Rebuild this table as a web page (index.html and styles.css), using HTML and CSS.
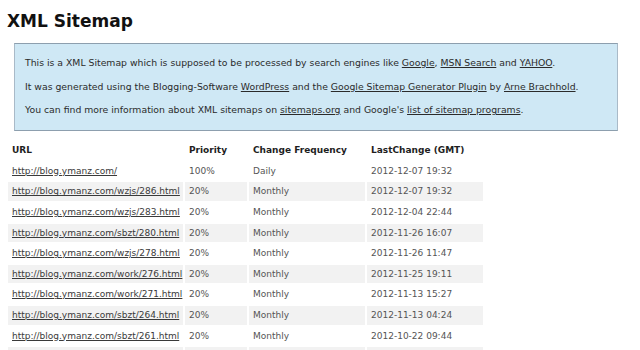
FILE: index.html
```html
<!DOCTYPE html>
<html>
<head>
<meta charset="utf-8">
<title>XML Sitemap</title>
<link rel="stylesheet" href="styles.css">
</head>
<body>
<h1 class="title">XML Sitemap</h1>
<div class="intro">
<p>This is a XML Sitemap which is supposed to be processed by search engines like <a href="#">Google</a>, <a href="#">MSN Search</a> and <a href="#">YAHOO</a>.</p>
<p>It was generated using the Blogging-Software <a href="#">WordPress</a> and the <a href="#">Google Sitemap Generator Plugin</a> by <a href="#">Arne Brachhold</a>.</p>
<p>You can find more information about XML sitemaps on <a href="#">sitemaps.org</a> and Google's <a href="#">list of sitemap programs</a>.</p>
</div>
<table class="urls">
<colgroup><col class="c-url"><col class="c-pri"><col class="c-freq"><col class="c-date"></colgroup>
<thead>
<tr><th>URL</th><th>Priority</th><th>Change Frequency</th><th>LastChange (GMT)</th></tr>
</thead>
<tbody>
<tr><td><a href="#">http://blog.ymanz.com/</a></td><td>100%</td><td>Daily</td><td>2012-12-07 19:32</td></tr>
<tr class="odd"><td><a href="#">http://blog.ymanz.com/wzjs/286.html</a></td><td>20%</td><td>Monthly</td><td>2012-12-07 19:32</td></tr>
<tr><td><a href="#">http://blog.ymanz.com/wzjs/283.html</a></td><td>20%</td><td>Monthly</td><td>2012-12-04 22:44</td></tr>
<tr class="odd"><td><a href="#">http://blog.ymanz.com/sbzt/280.html</a></td><td>20%</td><td>Monthly</td><td>2012-11-26 16:07</td></tr>
<tr><td><a href="#">http://blog.ymanz.com/wzjs/278.html</a></td><td>20%</td><td>Monthly</td><td>2012-11-26 11:47</td></tr>
<tr class="odd"><td><a href="#">http://blog.ymanz.com/work/276.html</a></td><td>20%</td><td>Monthly</td><td>2012-11-25 19:11</td></tr>
<tr><td><a href="#">http://blog.ymanz.com/work/271.html</a></td><td>20%</td><td>Monthly</td><td>2012-11-13 15:27</td></tr>
<tr class="odd"><td><a href="#">http://blog.ymanz.com/sbzt/264.html</a></td><td>20%</td><td>Monthly</td><td>2012-11-13 04:24</td></tr>
<tr><td><a href="#">http://blog.ymanz.com/sbzt/261.html</a></td><td>20%</td><td>Monthly</td><td>2012-10-22 09:44</td></tr>
<tr class="odd"><td>&nbsp;</td><td>&nbsp;</td><td>&nbsp;</td><td>&nbsp;</td></tr>
</tbody>
</table>
</body>
</html>
```
FILE: styles.css
```css
html, body {
  margin: 0;
  padding: 0;
  background: #fff;
}
body {
  font-family: "DejaVu Sans", "Liberation Sans", sans-serif;
  font-size: 9px;
  color: #2a2a2a;
}
.title {
  font-size: 17px;
  font-weight: bold;
  line-height: 20px;
  margin: 11px 0 0 7px;
  color: #111;
}
.intro {
  margin: 12px 0 0 14px;
  width: 582px;
  padding: 7px 10px 8px;
  background: #cfe8f5;
  border: 1px solid #a9bac8;
  border-top-color: #8d9fae;
  border-bottom-color: #8d9fae;
}
.intro p {
  margin: 0;
  font-size: 9.3px;
  line-height: 23.5px;
  color: #2b2b2b;
}
.intro a {
  color: #2b2b2b;
  text-decoration: underline;
}
.urls {
  margin: 8.7px 0 0 6px;
  width: 479px;
  border-collapse: separate;
  border-spacing: 2px;
  table-layout: fixed;
}
.c-url { width: 175px; }
.c-pri { width: 62px; }
.c-freq { width: 116px; }
.c-date { width: 116px; }
.urls th, .urls td {
  text-align: left;
  padding: 2px 4px;
  line-height: 14.6px;
  white-space: nowrap;
  overflow: hidden;
}
.urls th {
  font-weight: bold;
  color: #1e1e1e;
}
.urls td {
  color: #555;
}
.urls td a {
  color: #3a3a3a;
  text-decoration: underline;
}
.urls tr.odd td {
  background: #f2f2f2;
}
```
